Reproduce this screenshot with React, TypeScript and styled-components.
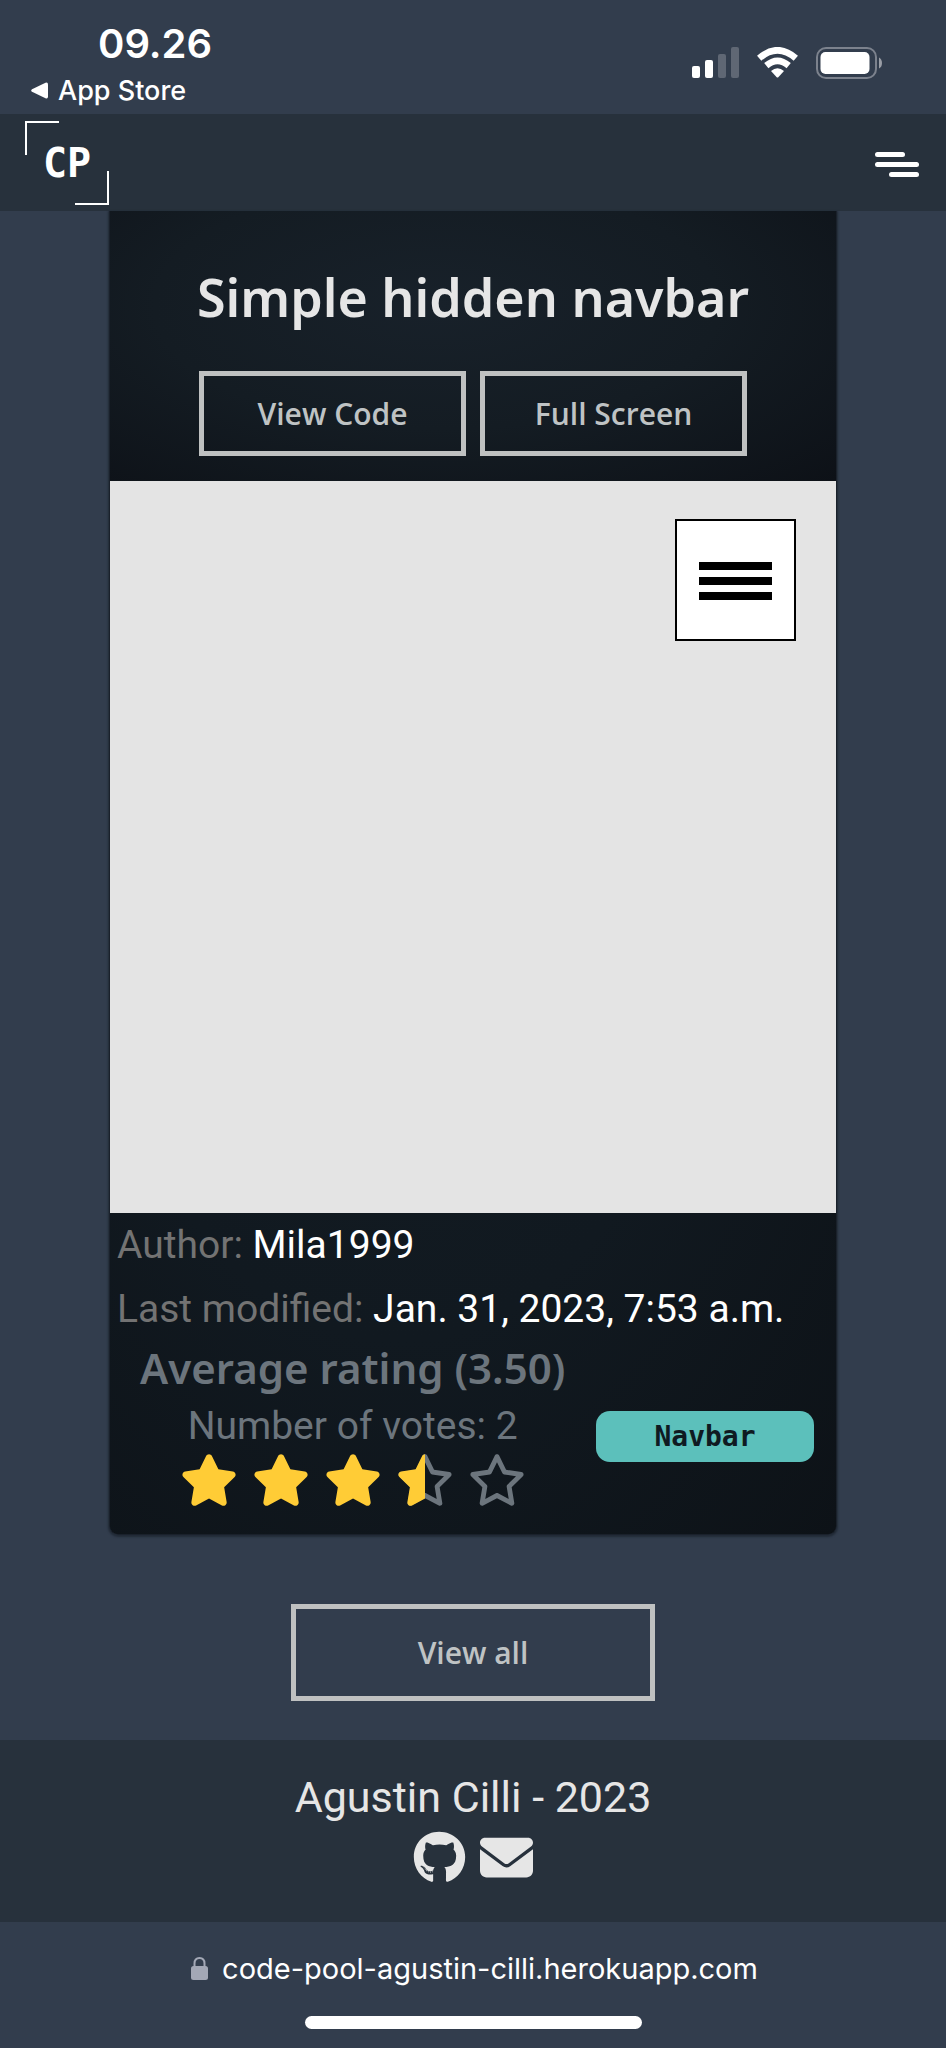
import React from "react";
import styled, { createGlobalStyle } from "styled-components";
import { FaStar, FaRegStar, FaStarHalf, FaGithub, FaEnvelope } from "react-icons/fa6";

const sans = `Inter, "Liberation Sans", sans-serif`;
const body = `Roboto, "Liberation Sans", sans-serif`;
const heading = `"Noto Sans", "Open Sans", sans-serif`;
const label = `"Open Sans", Lato, sans-serif`;
const mono = `"DejaVu Sans Mono", "Liberation Mono", monospace`;

const GlobalStyle = createGlobalStyle`
  *, *::before, *::after { box-sizing: border-box; }
  body { margin: 0; background: #323d4d; color: #fff; font-family: ${body}; }
  h1, h2, p { margin: 0; }
  a { color: inherit; text-decoration: none; }
`;

const Page = styled.div`
  display: flex;
  flex-direction: column;
  min-height: 100vh;
`;

const StatusBar = styled.header`
  display: flex;
  justify-content: space-between;
  height: 114px;
  padding: 20px 63px 0 31px;
  font-family: ${sans};
`;

const StatusLeft = styled.div`
  display: flex;
  flex-direction: column;
`;

const Clock = styled.time`
  padding-left: 67px;
  font-size: 40px;
  font-weight: 600;
  line-height: 48px;
`;

const BackLink = styled.a`
  display: flex;
  align-items: center;
  gap: 10px;
  font-size: 27px;
  font-weight: 500;
  line-height: 45px;
`;

const StatusIcons = styled.div`
  display: flex;
  gap: 18px;
  padding-top: 27px;
`;

const Navbar = styled.nav`
  display: flex;
  align-items: center;
  justify-content: space-between;
  height: 97px;
  padding: 0 27px 0 25px;
  background: #27313c;
`;

const Logo = styled.a`
  display: grid;
  place-items: center;
  width: 84px;
  height: 84px;
  font: 700 40px/84px ${mono};
  background:
    linear-gradient(#fff, #fff) 0 0 / 34px 2px,
    linear-gradient(#fff, #fff) 0 0 / 2px 34px,
    linear-gradient(#fff, #fff) 100% 100% / 34px 2px,
    linear-gradient(#fff, #fff) 100% 100% / 2px 34px;
  background-repeat: no-repeat;
`;

const MenuButton = styled.button`
  display: flex;
  flex-direction: column;
  gap: 5px;
  width: 44px;
  padding: 3px 0 0;
  border: 0;
  background: none;
`;

const MenuLine = styled.span<{ $short?: boolean; $end?: boolean }>`
  width: ${(p) => (p.$short ? 30 : 44)}px;
  height: 5px;
  border-radius: 3px;
  background: #fff;
  align-self: ${(p) => (p.$end ? "flex-end" : "flex-start")};
`;

const Main = styled.main`
  display: flex;
  flex-direction: column;
  align-items: center;
  padding: 0 109px 39px;
`;

const Card = styled.article`
  width: 100%;
  border: 1px solid #1a212b;
  border-top: 0;
  border-radius: 0 0 9px 9px;
  box-shadow: 0 1px 2px 1px #212a36;
  background: radial-gradient(ellipse at 40% 50%, #131c23 0%, #111920 50%, #0d1217 100%);
`;

const CardHeader = styled.div`
  display: flex;
  flex-direction: column;
  align-items: center;
  gap: 34px;
  padding: 46px 20px 25px;
  background: radial-gradient(ellipse at 45% 35%, #18212a 0%, #141c23 50%, #0d1117 100%);
`;

const Title = styled.h1`
  font: 600 52px/80px ${heading};
  color: #e6e6e6;
  white-space: nowrap;
`;

const ButtonRow = styled.div`
  display: flex;
  gap: 14px;
`;

const OutlineButton = styled.button<{ $large?: boolean }>`
  width: ${(p) => (p.$large ? 364 : 267)}px;
  height: ${(p) => (p.$large ? 97 : 85)}px;
  padding: 0;
  border: 5px solid #bfc1c1;
  background: transparent;
  color: #bfc3c4;
  font: 600 30px/36px ${label};
`;

const Preview = styled.section`
  display: flex;
  justify-content: flex-end;
  height: 732px;
  padding: 38px 40px;
  background: #e4e4e4;
`;

const PreviewMenu = styled.button`
  display: flex;
  flex-direction: column;
  align-items: center;
  justify-content: center;
  gap: 7px;
  width: 121px;
  height: 122px;
  padding: 2px 0 0;
  border: 2px solid #000;
  background: #fff;
`;

const PreviewLine = styled.span`
  width: 73px;
  height: 8px;
  background: #000;
`;

const Meta = styled.p`
  padding: 0 7px;
  font-size: 39px;
  line-height: 64px;
  color: #737373;
  white-space: nowrap;
`;

const MetaValue = styled.span`
  color: #fff;
`;

const RatingRow = styled.div`
  display: flex;
  align-items: center;
  justify-content: space-between;
  padding: 0 22px 25px 30px;
`;

const Rating = styled.div`
  display: flex;
  flex-direction: column;
  align-items: center;
  color: #6c757d;
`;

const RatingTitle = styled.h2`
  font: 600 42px/54px ${heading};
`;

const Votes = styled.p`
  padding-top: 6px;
  font-size: 39px;
  line-height: 50px;
`;

const Stars = styled.div`
  display: flex;
  gap: 14px;
  font-size: 58px;
  line-height: 0;
`;

const StarSlot = styled.span`
  display: grid;
  svg { grid-area: 1 / 1; }
`;

const Tag = styled.a`
  width: 218px;
  margin-top: 22px;
  border-radius: 14px;
  background: #5cc0bb;
  color: #0f1a22;
  font: 700 28px/51px ${mono};
  text-align: center;
`;

const ViewAllWrap = styled.div`
  padding-top: 69px;
`;

const Footer = styled.footer`
  display: flex;
  flex-direction: column;
  align-items: center;
  height: 182px;
  padding-top: 31px;
  background: #27313c;
  color: #e6e6e6;
`;

const FooterText = styled.p`
  font-size: 43px;
  line-height: 52px;
`;

const Social = styled.div`
  display: flex;
  align-items: center;
  gap: 14px;
  padding-top: 8px;
  font-size: 53px;
  line-height: 0;
`;

const BrowserBar = styled.div`
  display: flex;
  flex-direction: column;
  align-items: center;
  gap: 27px;
  padding-top: 26px;
  font-family: ${sans};
`;

const Address = styled.a`
  display: flex;
  align-items: center;
  gap: 14px;
  padding-left: 3px;
  font-size: 29px;
  line-height: 41px;
`;

const HomeIndicator = styled.div`
  width: 337px;
  height: 13px;
  border-radius: 7px;
  background: #fff;
`;

const GOLD = "#ffcc36";
const GREY = "#6c757d";

function Star({ fill }: { fill: number }) {
  return (
    <StarSlot>
      {fill < 1 && <FaRegStar color={GREY} />}
      {fill === 0.5 && <FaStarHalf color={GOLD} />}
      {fill === 1 && <FaStar color={GOLD} />}
    </StarSlot>
  );
}

function SignalIcon() {
  return (
    <svg width="47" height="31" viewBox="0 0 47 31" fill="#fff" aria-label="Signal">
      <rect x="0" y="19" width="8" height="12" rx="2" />
      <rect x="13" y="13" width="8" height="18" rx="2" />
      <rect x="26" y="7" width="8" height="24" rx="2" opacity="0.22" />
      <rect x="39" y="0" width="8" height="31" rx="2" opacity="0.22" />
    </svg>
  );
}

function WifiIcon() {
  return (
    <svg width="41" height="31" viewBox="0 0 41 31" aria-label="Wi-Fi">
      <g fill="none" stroke="#fff" strokeWidth="6.6">
        <path d="M2.2 11.2 Q20.5 -4.6 38.8 11.2" />
        <path d="M9.3 18.6 Q20.5 9.2 31.7 18.6" />
      </g>
      <path d="M14 24 Q20.5 18.6 27 24 L21.3 30.2 Q20.5 31 19.7 30.2Z" fill="#fff" />
    </svg>
  );
}

function BatteryIcon() {
  return (
    <svg width="67" height="32" viewBox="0 0 67 32" aria-label="Battery">
      <rect x="1" y="1" width="59" height="30" rx="9" fill="none" stroke="#7c828d" strokeWidth="2" />
      <rect x="4.5" y="5" width="49" height="22" rx="5" fill="#fff" />
      <path d="M63 10.5 Q66 12 66 16 Q66 20 63 21.5Z" fill="#9a9ea6" />
    </svg>
  );
}

export default function App() {
  return (
    <Page>
      <GlobalStyle />
      <StatusBar>
        <StatusLeft>
          <Clock>09.26</Clock>
          <BackLink href="#store">
            <svg width="17" height="17" viewBox="0 0 17 17" fill="#fff" aria-hidden="true">
              <path d="M1 7.2 14.5 .8Q17 0 17 2.5v12Q17 17 14.5 16.2L1 9.8Q-.6 8.5 1 7.2Z" />
            </svg>
            App Store
          </BackLink>
        </StatusLeft>
        <StatusIcons>
          <SignalIcon />
          <WifiIcon />
          <BatteryIcon />
        </StatusIcons>
      </StatusBar>

      <Navbar>
        <Logo href="#home">CP</Logo>
        <MenuButton aria-label="Open menu">
          <MenuLine $short />
          <MenuLine />
          <MenuLine $short $end />
        </MenuButton>
      </Navbar>

      <Main>
        <Card>
          <CardHeader>
            <Title>Simple hidden navbar</Title>
            <ButtonRow>
              <OutlineButton>View Code</OutlineButton>
              <OutlineButton>Full Screen</OutlineButton>
            </ButtonRow>
          </CardHeader>
          <Preview>
            <PreviewMenu aria-label="Toggle navigation">
              <PreviewLine />
              <PreviewLine />
              <PreviewLine />
            </PreviewMenu>
          </Preview>
          <Meta>
            Author: <MetaValue>Mila1999</MetaValue>
          </Meta>
          <Meta>
            Last modified: <MetaValue>Jan. 31, 2023, 7:53 a.m.</MetaValue>
          </Meta>
          <RatingRow>
            <Rating>
              <RatingTitle>Average rating (3.50)</RatingTitle>
              <Votes>Number of votes: 2</Votes>
              <Stars>
                {[1, 1, 1, 0.5, 0].map((fill, i) => (
                  <Star key={i} fill={fill} />
                ))}
              </Stars>
            </Rating>
            <Tag href="#navbar">Navbar</Tag>
          </RatingRow>
        </Card>
        <ViewAllWrap>
          <OutlineButton $large>View all</OutlineButton>
        </ViewAllWrap>
      </Main>

      <Footer>
        <FooterText>Agustin Cilli - 2023</FooterText>
        <Social>
          <a href="#github" aria-label="GitHub"><FaGithub /></a>
          <a href="#mail" aria-label="Email"><FaEnvelope /></a>
        </Social>
      </Footer>

      <BrowserBar>
        <Address href="#site">
          <svg width="17" height="23" viewBox="0 0 17 23" aria-hidden="true">
            <rect x="0" y="9" width="17" height="14" rx="2.5" fill="#a3a8b6" />
            <path d="M3.5 10V6.5Q3.5 1 8.5 1T13.5 6.5V10" fill="none" stroke="#a3a8b6" strokeWidth="2" />
          </svg>
          code-pool-agustin-cilli.herokuapp.com
        </Address>
        <HomeIndicator />
      </BrowserBar>
    </Page>
  );
}
